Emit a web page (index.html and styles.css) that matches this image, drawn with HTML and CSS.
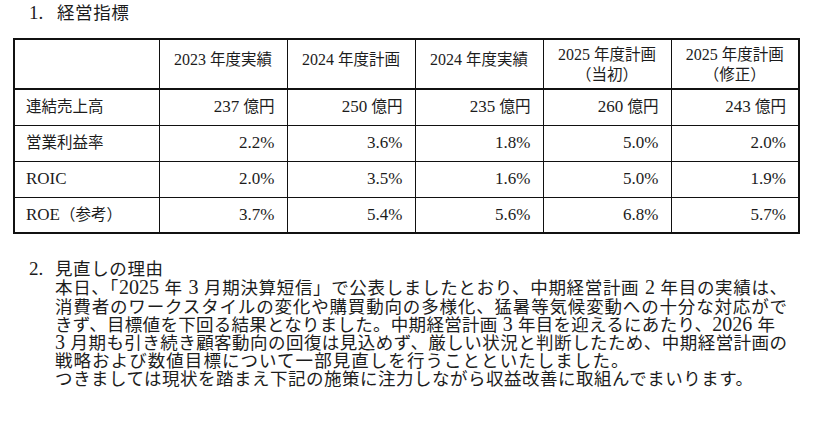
FILE: index.html
```html
<!DOCTYPE html>
<html lang="ja">
<head>
<meta charset="utf-8">
<title>経営指標</title>
<link rel="stylesheet" href="styles.css">
</head>
<body>
<div class="page">
  <div class="sec-title"><span class="mk">1.</span>経営指標</div>
  <table class="kpi">
    <colgroup>
      <col class="c-label"><col class="c-val"><col class="c-val"><col class="c-val"><col class="c-val"><col class="c-val">
    </colgroup>
    <thead>
      <tr>
        <th></th>
        <th class="one"><span class="n">2023 </span>年度実績</th>
        <th class="one"><span class="n">2024 </span>年度計画</th>
        <th class="one"><span class="n">2024 </span>年度実績</th>
        <th><span class="n">2025 </span>年度計画<br>（当初）</th>
        <th><span class="n">2025 </span>年度計画<br>（修正）</th>
      </tr>
    </thead>
    <tbody>
      <tr>
        <td class="lbl">連結売上高</td>
        <td><span class="n">237 </span>億円</td>
        <td><span class="n">250 </span>億円</td>
        <td><span class="n">235 </span>億円</td>
        <td><span class="n">260 </span>億円</td>
        <td><span class="n">243 </span>億円</td>
      </tr>
      <tr>
        <td class="lbl">営業利益率</td>
        <td class="n">2.2%</td>
        <td class="n">3.6%</td>
        <td class="n">1.8%</td>
        <td class="n">5.0%</td>
        <td class="n">2.0%</td>
      </tr>
      <tr>
        <td class="lbl n">ROIC</td>
        <td class="n">2.0%</td>
        <td class="n">3.5%</td>
        <td class="n">1.6%</td>
        <td class="n">5.0%</td>
        <td class="n">1.9%</td>
      </tr>
      <tr>
        <td class="lbl"><span class="n">ROE</span>（参考）</td>
        <td class="n">3.7%</td>
        <td class="n">5.4%</td>
        <td class="n">5.6%</td>
        <td class="n">6.8%</td>
        <td class="n">5.7%</td>
      </tr>
    </tbody>
  </table>

  <div class="sec-title sec2"><span class="mk mk2">2.</span>見直しの理由</div>
  <p class="body-text">
    <span class="ln">本日、「<span class="bn">2025 </span>年<span class="bn"> 3 </span>月期決算短信」で公表しましたとおり、中期経営計画<span class="bn"> 2 </span>年目の実績は、</span>
    <span class="ln">消費者のワークスタイルの変化や購買動向の多様化、猛暑等気候変動への十分な対応がで</span>
    <span class="ln ln-short">きず、目標値を下回る結果となりました。中期経営計画<span class="bn"> 3 </span>年目を迎えるにあたり、<span class="bn">2026 </span>年</span>
    <span class="ln"><span class="bn">3 </span>月期も引き続き顧客動向の回復は見込めず、厳しい状況と判断したため、中期経営計画の</span>
    <span class="ln ln-free">戦略および数値目標について一部見直しを行うことといたしました。</span>
    <span class="ln ln-free ln-tight">つきましては現状を踏まえ下記の施策に注力しながら収益改善に取組んでまいります。</span>
  </p>
</div>
</body>
</html>
```

FILE: styles.css
```css
html, body {
  margin: 0;
  padding: 0;
  background: #ffffff;
}

body {
  color: #1c1c1c;
  font-family: "Liberation Serif", "Noto Sans CJK JP", serif;
}

.page {
  padding-top: 3px;
}

.sec-title {
  margin-left: 29px;
  font-family: "Noto Sans CJK JP", sans-serif;
  font-size: 17.5px;
  letter-spacing: 0.6px;
  line-height: 18.2px;
  white-space: nowrap;
}

.mk {
  display: inline-block;
  width: 28px;
  font-family: "Liberation Serif", serif;
  font-size: 19px;
  letter-spacing: 0;
  line-height: 18.2px;
}

.mk2 {
  width: 26px;
}

.kpi {
  margin: 16px 0 0 13px;
  width: 786px;
  table-layout: fixed;
  border-collapse: collapse;
  border: 2px solid #111;
  font-size: 15.5px;
  line-height: 20px;
}

.c-label { width: 145px; }
.c-val { width: 128px; }

.kpi th,
.kpi td {
  border: 1px solid #111;
  padding: 0 12px;
  white-space: nowrap;
}

.kpi thead tr {
  height: 48px;
}

.kpi th {
  font-weight: normal;
  text-align: center;
  vertical-align: top;
  padding-top: 5px;
  padding-bottom: 3px;
  border-bottom-width: 2px;
}

.kpi th.one {
  padding-top: 10px;
}

.kpi tbody tr {
  height: 36px;
}

.kpi td {
  text-align: right;
  vertical-align: middle;
}

.kpi td.lbl {
  text-align: left;
  padding-left: 11px;
}

.n {
  font-family: "Liberation Serif", serif;
  font-size: 17px;
}

.kpi th .n {
  font-size: 16px;
}

.sec2 {
  margin-top: 25px;
}

.body-text {
  margin: 0 0 0 55px;
  width: 732px;
  font-family: "Noto Sans CJK JP", sans-serif;
  font-size: 17.5px;
  line-height: 18.2px;
}

.ln {
  display: block;
  text-align: justify;
  text-align-last: justify;
  text-justify: inter-character;
}

.ln-short {
  width: 720px;
}

.ln-free {
  text-align: left;
  text-align-last: auto;
  white-space: nowrap;
  letter-spacing: 1.05px;
}

.ln-tight {
  letter-spacing: 0.5px;
}

.bn {
  font-family: "Liberation Serif", serif;
  font-size: 20px;
  letter-spacing: 0;
  line-height: 0;
}
```
